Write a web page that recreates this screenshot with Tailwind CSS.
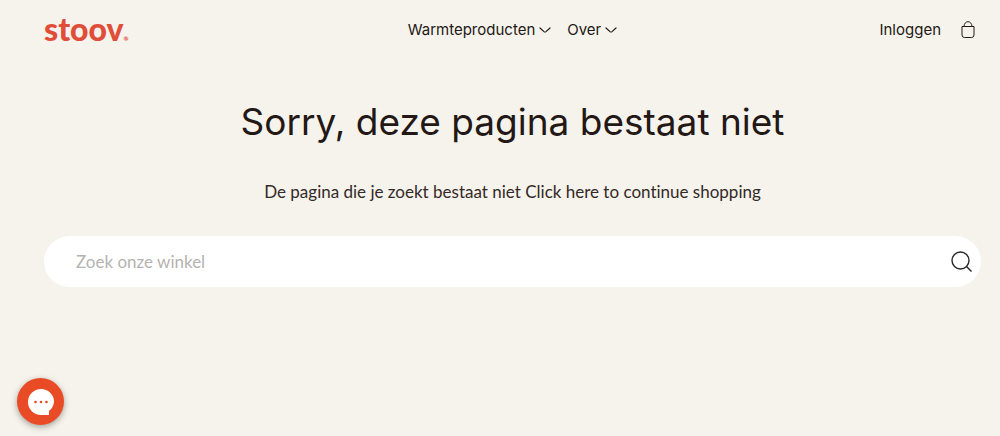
<!DOCTYPE html>
<html lang="nl">
<head>
    <meta charset="UTF-8">
    <meta name="viewport" content="width=device-width, initial-scale=1">
    <title>Sorry, deze pagina bestaat niet</title>
    <script src="https://cdn.jsdelivr.net/npm/@tailwindcss/browser@4"></script>
</head>
<body class="min-h-screen bg-[#f6f3ec] text-[#231815] font-['Lato',sans-serif]">
    <header class="grid grid-cols-[1fr_auto_1fr] items-center h-15 pl-11 pr-[19px] font-['Inter',sans-serif] text-[15px]">
        <a href="#" aria-label="Stoov" class="flex items-end pb-0.5 text-[#e04e39] font-['Lato',sans-serif] font-black text-[32px] leading-8">stoov<span class="text-[6px] leading-3">®</span></a>

        <nav class="flex gap-4">
            <button class="flex items-center gap-1">Warmteproducten
                <svg class="w-3 h-3" viewBox="0 0 12 12" fill="none" stroke="currentColor" stroke-width="1.2" stroke-linecap="round"><path d="M1 4l4 3.600q1 .8 2 0l4-3.600"/></svg>
            </button>
            <button class="flex items-center gap-1">Over
                <svg class="w-3 h-3" viewBox="0 0 12 12" fill="none" stroke="currentColor" stroke-width="1.2" stroke-linecap="round"><path d="M1 4l4 3.600q1 .8 2 0l4-3.600"/></svg>
            </button>
        </nav>

        <div class="flex items-center justify-end gap-5 pr-1.5">
            <a href="#">Inloggen</a>
            <a href="#" aria-label="Winkelwagen">
                <svg class="w-3.5 h-4.5" viewBox="0 0 14 18" fill="none" stroke="currentColor" stroke-width="1"><path d="M1 5.500h12v8.500a2.500 2.500 0 0 1-2.500 2.500h-7a2.500 2.500 0 0 1-2.500-2.500zM3 5.500a4 4.800 0 0 1 8 0"/></svg>
            </a>
        </div>
    </header>

    <main class="pl-11 pr-[19px] pt-9 text-center">
        <h1 class="font-['Inter',sans-serif] text-[37px] leading-[52px]">Sorry, deze pagina bestaat niet</h1>
        <p class="mt-8 text-[17px] leading-6 text-[#332a27] [font-variant-ligatures:none]">De pagina die je zoekt bestaat niet <a href="#">Click here to continue shopping</a></p>

        <form class="mt-8 flex items-center h-[51px] rounded-full bg-white pl-8 pr-2">
            <input type="search" aria-label="Zoek onze winkel" placeholder="Zoek onze winkel" class="flex-1 text-[17px] outline-none placeholder:text-[#b5b3b1]">
            <button aria-label="Zoeken">
                <svg class="w-6 h-6" viewBox="0 0 24 24" fill="none" stroke="#2b2526" stroke-width="1.4"><circle cx="11.500" cy="10.500" r="8.500"/><path d="M17.500 16.500l5 5"/></svg>
            </button>
        </form>
    </main>

    <button aria-label="Chat" class="fixed left-[17px] bottom-[11px] flex items-center justify-center w-[47px] h-[47px] rounded-full bg-[#e84b25] shadow-[0_2px_6px_rgba(0,0,0,0.35)]">
        <svg class="w-7 h-7" viewBox="0 0 28 28"><path d="M14 1a13 13 0 1 0 0 26h8v-4a13 13 0 0 0 5-9.500a13 12.500 0 0 0-13-12.500z" fill="#fff"/><g fill="#e84b25"><circle cx="8.500" cy="14" r="1.300"/><circle cx="14" cy="14" r="1.300"/><circle cx="19.500" cy="14" r="1.300"/></g></svg>
    </button>
</body>
</html>
